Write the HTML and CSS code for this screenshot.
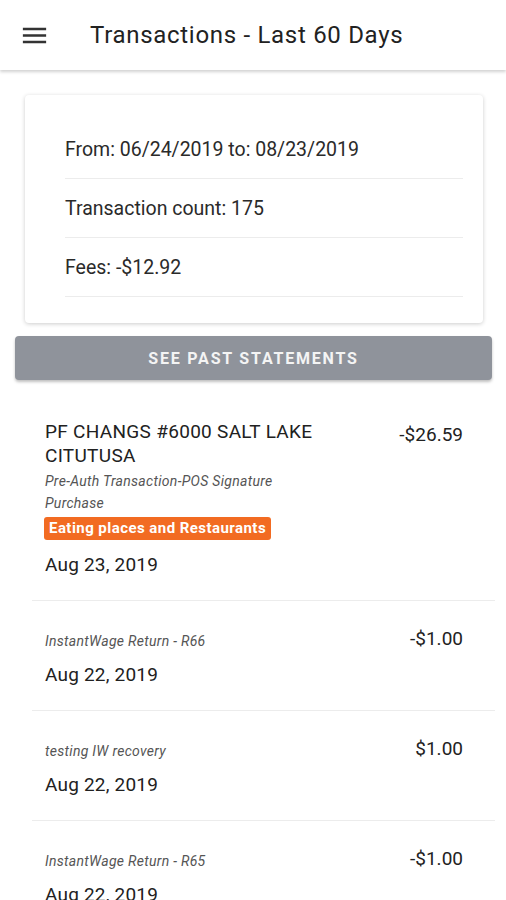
FILE: index.html
```html
<!DOCTYPE html>
<html lang="en">
<head>
    <meta charset="UTF-8">
    <meta name="viewport" content="width=device-width, initial-scale=1.0">
    <title>Transactions</title>
    <link rel="stylesheet" href="styles.css">
</head>
<body>
    <header class="app-bar">
        <svg class="menu-icon" viewBox="0 0 24 24" width="31" height="31">
            <path d="M3 18h18v-2H3v2zm0-5h18v-2H3v2zm0-7v2h18V6H3z" fill="#333"/>
        </svg>
        <h1 class="app-title">Transactions - Last 60 Days</h1>
    </header>

    <section class="summary-card">
        <ul class="summary-list">
            <li>From: 06/24/2019 to: 08/23/2019</li>
            <li>Transaction count: 175</li>
            <li>Fees: -$12.92</li>
        </ul>
    </section>

    <button class="statements-btn">See past statements</button>

    <ul class="tx-list">
        <li class="tx">
            <div class="tx-main">
                <div class="tx-name">PF CHANGS #6000 SALT LAKE CITUTUSA</div>
                <div class="tx-desc">Pre-Auth Transaction-POS Signature Purchase</div>
                <span class="tx-tag">Eating places and Restaurants</span>
                <div class="tx-date">Aug 23, 2019</div>
            </div>
            <div class="tx-amount first">-$26.59</div>
        </li>
        <li class="tx">
            <div class="tx-main">
                <div class="tx-desc">InstantWage Return - R66</div>
                <div class="tx-date">Aug 22, 2019</div>
            </div>
            <div class="tx-amount">-$1.00</div>
        </li>
        <li class="tx">
            <div class="tx-main">
                <div class="tx-desc">testing IW recovery</div>
                <div class="tx-date">Aug 22, 2019</div>
            </div>
            <div class="tx-amount">$1.00</div>
        </li>
        <li class="tx">
            <div class="tx-main">
                <div class="tx-desc">InstantWage Return - R65</div>
                <div class="tx-date">Aug 22, 2019</div>
            </div>
            <div class="tx-amount">-$1.00</div>
        </li>
    </ul>
</body>
</html>
```

FILE: styles.css
```css
/* Page */
body {
    margin: 0;
    font-family: Roboto, "Noto Sans", sans-serif;
    color: #212121;
    background: #fff;
}

/* App bar */
.app-bar {
    height: 70px;
    display: flex;
    align-items: center;
    padding-left: 19px;
    background: #fff;
    box-shadow: 0 2px 3px rgba(0, 0, 0, 0.18);
    position: relative;
}

.menu-icon {
    display: block;
}

.app-title {
    margin: 0 0 0 40px;
    font-size: 24px;
    font-weight: 400;
    color: #222;
    letter-spacing: 0.7px;
}

/* Summary card */
.summary-card {
    margin: 25px 23px 0 25px;
    padding: 25px 20px 26px 0;
    background: #fff;
    border-radius: 4px;
    box-shadow: 0 1px 4px rgba(0, 0, 0, 0.2);
}

.summary-list {
    list-style: none;
    margin: 0;
    padding-left: 40px;
}

.summary-list li {
    height: 58px;
    display: flex;
    align-items: center;
    font-size: 19.5px;
    color: #2a2a2a;
    border-bottom: 1px solid #ececec;
}

/* Button */
.statements-btn {
    display: block;
    width: 477px;
    height: 44px;
    margin: 13px 0 0 15px;
    border: none;
    border-radius: 4px;
    background: #8f939b;
    color: #f4f4f4;
    font-family: Roboto, sans-serif;
    font-size: 16px;
    font-weight: 700;
    letter-spacing: 1.8px;
    text-transform: uppercase;
    box-shadow: 0 2px 3px rgba(0, 0, 0, 0.25);
}

/* Transactions */
.tx-list {
    list-style: none;
    margin: 11px 11px 0 32px;
    padding: 0;
}

.tx {
    display: flex;
    justify-content: space-between;
    align-items: flex-start;
    padding: 29px 32px 23px 13px;
    border-bottom: 1px solid #ececec;
}

.tx-main {
    flex: 1;
    min-width: 0;
}

.tx-name {
    font-size: 19px;
    line-height: 24px;
    letter-spacing: 0.3px;
    width: 300px;
    margin-bottom: 2px;
}

.tx-desc {
    font-size: 14px;
    line-height: 22px;
    font-style: italic;
    letter-spacing: 0.3px;
    color: #555;
    width: 250px;
}

.tx-tag {
    display: inline-block;
    margin: 3px 0 2px -1px;
    padding: 0 5px;
    height: 23px;
    line-height: 23px;
    border-radius: 3px;
    background: #f26b22;
    color: #fff;
    font-size: 15px;
    font-weight: 700;
    letter-spacing: 0.45px;
}

.tx-date {
    margin-top: 11px;
    font-size: 19px;
    line-height: 24px;
    letter-spacing: 0.2px;
}

.tx-amount {
    margin-top: -3px;
    font-size: 19px;
    line-height: 24px;
    white-space: nowrap;
    color: #222;
}

.tx-amount.first {
    margin-top: 3px;
}
```
